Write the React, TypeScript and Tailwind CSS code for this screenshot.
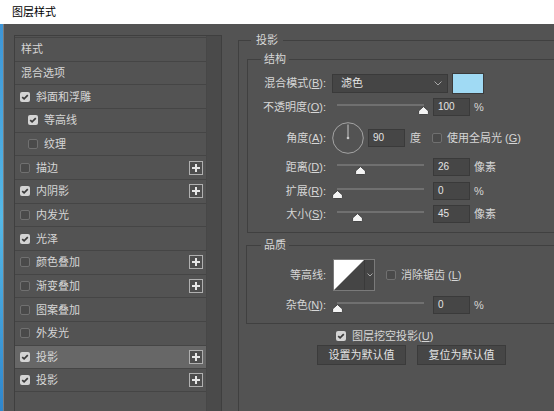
import React from 'react';

const F = "font-['Liberation_Sans','Noto_Sans_CJK_SC',sans-serif]";

function Check({ on }: { on: boolean }) {
  return on ? (
    <span className="flex w-[10px] h-[10px] shrink-0 items-center justify-center rounded-[2px] bg-[#d4d4d4]">
      <svg width="8" height="8" viewBox="0 0 8 8">
        <path d="M1.2 4.1 L3.1 5.9 L6.8 2.1" fill="none" stroke="#3a3a3a" strokeWidth="1.7" />
      </svg>
    </span>
  ) : (
    <span className="block w-[10px] h-[10px] shrink-0 rounded-[2px] border border-[#707070] bg-[#4a4a4a]" />
  );
}

function Plus() {
  return (
    <span className="flex w-[14px] h-[14px] shrink-0 items-center justify-center border border-[#b0b0b0] bg-[#4e4e4e]">
      <svg width="10" height="10" viewBox="0 0 10 10">
        <path d="M5 1v8M1 5h8" stroke="#e6e6e6" strokeWidth="2" />
      </svg>
    </span>
  );
}

function Slider({ pos }: { pos: string }) {
  return (
    <div className="relative ml-[6px] w-[97px] h-[18px] shrink-0">
      <div className="ml-[5px] mt-[6px] w-[87px] h-[2px] bg-[#707070]" />
      <svg className={`absolute top-[8px] ${pos}`} width="11" height="9" viewBox="0 0 11 9">
        <path d="M5.5 0.6 L10.4 5 L10.4 7.6 Q10.4 8.5 9.5 8.5 L1.5 8.5 Q0.6 8.5 0.6 7.6 L0.6 5 Z" fill="#f4f4f4" stroke="#2e2e2e" strokeWidth="0.8" />
      </svg>
    </div>
  );
}

function Num({ v, cls }: { v: string; cls: string }) {
  return (
    <div className={`${cls} w-[37px] h-[18px] shrink-0 flex items-center pl-[4px] bg-[#464646] border border-[#3a3a3a] text-[10px] text-[#e4e4e4]`}>
      {v}
    </div>
  );
}

function Lbl({ w, children }: { w: string; children: React.ReactNode }) {
  return <div className={`${w} shrink-0 text-right whitespace-nowrap`}>{children}</div>;
}

const items: { t: string; cb: boolean | null; indent?: boolean; plus?: boolean; sel?: boolean }[] = [
  { t: '样式', cb: null },
  { t: '混合选项', cb: null },
  { t: '斜面和浮雕', cb: true },
  { t: '等高线', cb: true, indent: true },
  { t: '纹理', cb: false, indent: true },
  { t: '描边', cb: false, plus: true },
  { t: '内阴影', cb: true, plus: true },
  { t: '内发光', cb: false },
  { t: '光泽', cb: true },
  { t: '颜色叠加', cb: false, plus: true },
  { t: '渐变叠加', cb: false, plus: true },
  { t: '图案叠加', cb: false },
  { t: '外发光', cb: false },
  { t: '投影', cb: true, plus: true, sel: true },
  { t: '投影', cb: true, plus: true },
];

export default function App() {
  return (
    <div className={`w-[554px] h-[411px] overflow-hidden bg-[#535353] ${F} text-[11px] leading-[16px] text-[#d6d6d6] flex flex-col`}>
      <div className="h-[24px] shrink-0 bg-white flex items-center pl-[12px] text-black">图层样式</div>
      <div className="flex flex-1 min-h-0">
        <div className="w-[3px] shrink-0 bg-gradient-to-b from-[#3d95d6] via-[#55b8e6] to-[#2f86cc]" />
        <div className="w-[1px] shrink-0 bg-[#7c7c7c]" />

        {/* left style list */}
        <div className="ml-[10px] mt-[11px] w-[208px] h-[400px] shrink-0 flex border-l border-t border-r border-[#3f3f3f]">
          <div className="w-[191px] pt-[1px]">
            {items.map((it, i) => (
              <div
                key={i}
                className={`h-[23.67px] flex items-center border-t border-[#454545] ${i === items.length - 1 ? 'border-b' : ''} ${it.sel ? 'bg-[#676767]' : ''} ${it.cb === null ? 'pl-[6px]' : it.indent ? 'pl-[13px]' : 'pl-[5px]'} pr-[3px]`}
              >
                {it.cb !== null && <Check on={it.cb} />}
                <span className={it.cb === null ? '' : 'ml-[6px]'}>{it.t}</span>
                <div className="flex-1" />
                {it.plus && <Plus />}
              </div>
            ))}
          </div>
          <div className="w-[15px] bg-[#4a4a4a] border-l border-[#474747]" />
        </div>

        {/* right settings */}
        <fieldset className="ml-[16px] mt-[8px] w-[340px] h-[420px] shrink-0 border border-[#404040]">
          <legend className="ml-[12px] px-[5px] leading-[16px]">投影</legend>

          <fieldset className="ml-[8px] mt-[3px] w-[320px] border border-[#404040] pb-[9px]">
            <legend className="ml-[13px] px-[3px] leading-[16px]">结构</legend>

            <div className="mt-[5px] h-[22px] flex items-center">
              <Lbl w="w-[78px]">混合模式(<u>B</u>):</Lbl>
              <div className="ml-[6px] w-[116px] h-[19px] flex items-center justify-between pl-[8px] pr-[5px] bg-[#454545] border border-[#3a3a3a] text-[#e4e4e4]">
                <span>滤色</span>
                <svg width="8" height="5" viewBox="0 0 8 5">
                  <path d="M0.5 0.5 L4 4 L7.5 0.5" fill="none" stroke="#a8a8a8" strokeWidth="1" />
                </svg>
              </div>
              <div className="ml-[4px] w-[32px] h-[21px] bg-[#a0daf4] border border-[#3a3a3a]" />
            </div>

            <div className="mt-[4px] h-[18px] flex items-center">
              <Lbl w="w-[78px]">不透明度(<u>O</u>):</Lbl>
              <Slider pos="left-[86px]" />
              <Num v="100" cls="ml-[4px]" />
              <span className="ml-[4px]">%</span>
            </div>

            <div className="mt-[6px] h-[32px] flex items-center">
              <Lbl w="w-[78px]">角度(<u>A</u>):</Lbl>
              <svg className="ml-[6px] shrink-0" width="32" height="32" viewBox="0 0 32 32">
                <circle cx="16" cy="16" r="15.3" fill="none" stroke="#a4a4a4" strokeWidth="1" />
                <path d="M16 16 V2.5" stroke="#c8c8c8" strokeWidth="1" />
                <circle cx="16" cy="16" r="1.3" fill="#c8c8c8" />
              </svg>
              <Num v="90" cls="ml-[4px]" />
              <span className="ml-[5px]">度</span>
              <span className="ml-[11px]"><Check on={false} /></span>
              <span className="ml-[5px] whitespace-nowrap">使用全局光 (<u>G</u>)</span>
            </div>

            <div className="mt-[4px] h-[18px] flex items-center">
              <Lbl w="w-[78px]">距离(<u>D</u>):</Lbl>
              <Slider pos="left-[23px]" />
              <Num v="26" cls="ml-[4px]" />
              <span className="ml-[4px]">像素</span>
            </div>

            <div className="mt-[6px] h-[18px] flex items-center">
              <Lbl w="w-[78px]">扩展(<u>R</u>):</Lbl>
              <Slider pos="left-0" />
              <Num v="0" cls="ml-[4px]" />
              <span className="ml-[4px]">%</span>
            </div>

            <div className="mt-[5px] h-[18px] flex items-center">
              <Lbl w="w-[78px]">大小(<u>S</u>):</Lbl>
              <Slider pos="left-[20px]" />
              <Num v="45" cls="ml-[4px]" />
              <span className="ml-[4px]">像素</span>
            </div>
          </fieldset>

          <fieldset className="ml-[7px] mt-[4px] w-[320px] border border-[#404040] pb-[9px]">
            <legend className="ml-[14px] px-[3px] leading-[16px]">品质</legend>

            <div className="mt-[6px] h-[32px] flex items-center">
              <Lbl w="w-[79px]">等高线:</Lbl>
              <div className="ml-[7px] h-[32px] flex border border-[#7a7a7a]">
                <svg width="30" height="30" viewBox="0 0 30 30" className="block">
                  <rect width="30" height="30" fill="#454545" />
                  <polygon points="0,0 30,0 0,30" fill="#ffffff" />
                </svg>
                <div className="w-[10px] flex items-center justify-center bg-[#454545] border-l border-[#3a3a3a]">
                  <svg width="6" height="4" viewBox="0 0 6 4">
                    <path d="M0.5 0.5 L3 3 L5.5 0.5" fill="none" stroke="#a8a8a8" strokeWidth="1" />
                  </svg>
                </div>
              </div>
              <span className="ml-[11px]"><Check on={false} /></span>
              <span className="ml-[5px] whitespace-nowrap">消除锯齿 (<u>L</u>)</span>
            </div>

            <div className="mt-[5px] h-[18px] flex items-center">
              <Lbl w="w-[79px]">杂色(<u>N</u>):</Lbl>
              <Slider pos="left-0" />
              <Num v="0" cls="ml-[4px]" />
              <span className="ml-[4px]">%</span>
            </div>
          </fieldset>

          <div className="mt-[4px] ml-[97px] h-[16px] flex items-center">
            <Check on={true} />
            <span className="ml-[6px] whitespace-nowrap">图层挖空投影(<u>U</u>)</span>
          </div>

          <div className="mt-[1px] ml-[78px] flex gap-[11px]">
            <div className="w-[89px] h-[20px] flex items-center justify-center bg-[#464646] border border-[#3b3b3b] text-[#e4e4e4]">设置为默认值</div>
            <div className="w-[89px] h-[20px] flex items-center justify-center bg-[#464646] border border-[#3b3b3b] text-[#e4e4e4]">复位为默认值</div>
          </div>
        </fieldset>
      </div>
    </div>
  );
}
